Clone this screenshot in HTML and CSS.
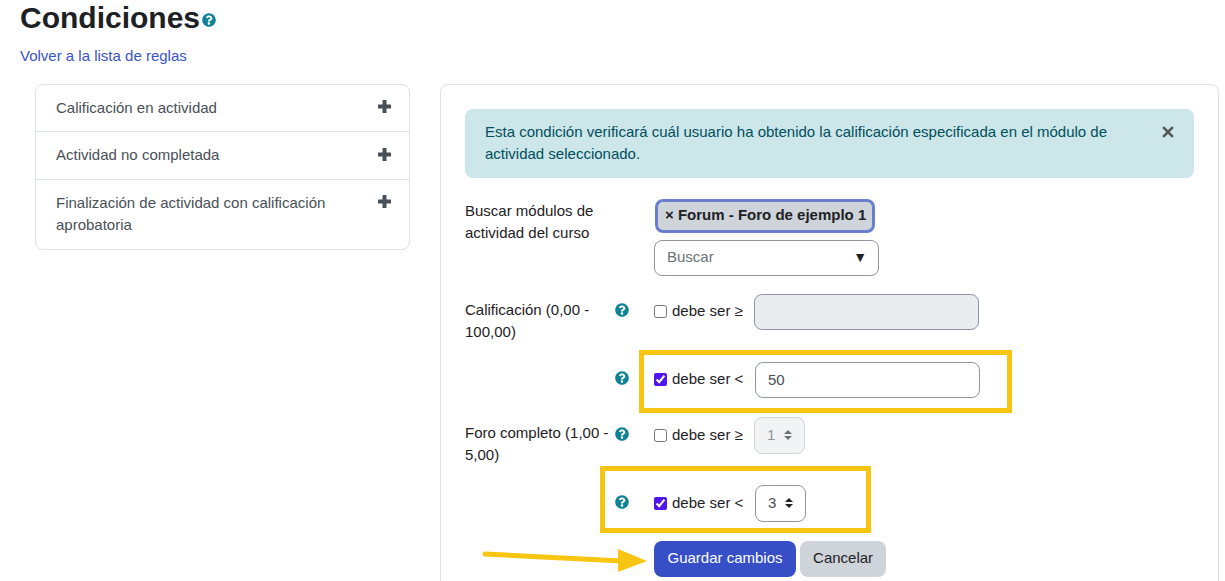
FILE: index.html
```html
<!DOCTYPE html>
<html lang="es">
<head>
	<meta charset="UTF-8">
	<title>Condiciones</title>
	<link rel="stylesheet" href="styles.css">
</head>
<body>
	<svg class="icon-defs" width="0" height="0">
		<symbol id="icon-help" viewBox="0 0 512 512">
			<path d="M504 256c0 136.997-111.043 248-248 248S8 392.997 8 256C8 119.083 119.043 8 256 8s248 111.083 248 248zM262.655 90c-54.497 0-89.255 22.957-116.549 63.758-3.536 5.286-2.353 12.415 2.715 16.258l34.699 26.31c5.205 3.947 12.621 3.008 16.665-2.122 17.864-22.658 30.113-35.797 57.303-35.797 20.429 0 45.698 13.148 45.698 32.958 0 14.976-12.363 22.667-32.534 33.976C247.128 238.528 216 254.941 216 296v4c0 6.627 5.373 12 12 12h56c6.627 0 12-5.373 12-12v-1.333c0-28.462 83.186-29.647 83.186-106.667 0-58.002-60.165-102-116.531-102zM256 338c-25.365 0-46 20.635-46 46 0 25.364 20.635 46 46 46s46-20.636 46-46c0-25.365-20.635-46-46-46z"/>
		</symbol>
		<symbol id="icon-plus" viewBox="0 0 13 13">
			<path d="M5 0H8Q8.5 0 8.5 .5V4.5H12.5Q13 4.5 13 5V8Q13 8.5 12.5 8.5H8.5V12.5Q8.5 13 8 13H5Q4.5 13 4.5 12.5V8.5H.5Q0 8.5 0 8V5Q0 4.5 .5 4.5H4.5V.5Q4.5 0 5 0z"/>
		</symbol>
		<symbol id="icon-updown" viewBox="0 0 8 10">
			<path d="M4 0 8 4H0zM4 10 0 6H8z"/>
		</symbol>
	</svg>

	<header class="page-head">
		<h1 class="page-title">Condiciones<svg class="help help-title"><use href="#icon-help"/></svg></h1>
		<a class="back-link" href="#">Volver a la lista de reglas</a>
	</header>

	<div class="columns">
		<ul class="rule-list">
			<li class="rule-item"><span>Calificación en actividad</span><svg class="plus"><use href="#icon-plus"/></svg></li>
			<li class="rule-item"><span>Actividad no completada</span><svg class="plus"><use href="#icon-plus"/></svg></li>
			<li class="rule-item"><span>Finalización de actividad con calificación aprobatoria</span><svg class="plus"><use href="#icon-plus"/></svg></li>
		</ul>

		<section class="card">
			<div class="alert">
				<p>Esta condición verificará cuál usuario ha obtenido la calificación especificada en el módulo de actividad seleccionado.</p>
				<svg class="alert-close" viewBox="0 0 12 12"><path d="M1.2 1.2 10.8 10.8M10.8 1.2 1.2 10.8"/></svg>
			</div>

			<form class="rule-form">
				<div class="row row-search">
					<div class="row-label"><span class="label-text">Buscar módulos de actividad del curso</span></div>
					<div class="search-field">
						<span class="chip">× Forum - Foro de ejemplo 1</span>
						<div class="search-box"><span>Buscar</span><span class="search-caret">▼</span></div>
					</div>
				</div>

				<div class="row">
					<div class="row-label"><span class="label-text">Calificación (0,00 - 100,00)</span><svg class="help"><use href="#icon-help"/></svg></div>
					<div class="check-field">
						<label class="check"><input type="checkbox">debe ser ≥</label>
						<input class="text-input" type="text" disabled>
					</div>
				</div>

				<div class="row row-grade-max">
					<div class="row-label row-label-empty"><span class="label-text"></span><svg class="help"><use href="#icon-help"/></svg></div>
					<div class="check-field">
						<label class="check"><input type="checkbox" checked>debe ser &lt;</label>
						<input class="text-input shifted" type="text" value="50">
					</div>
				</div>

				<div class="row num-row">
					<div class="row-label"><span class="label-text">Foro completo (1,00 - 5,00)</span><svg class="help"><use href="#icon-help"/></svg></div>
					<div class="check-field">
						<label class="check"><input type="checkbox">debe ser ≥</label>
						<div class="num-select disabled"><span>1</span><svg class="updown"><use href="#icon-updown"/></svg></div>
					</div>
				</div>

				<div class="row num-row row-forum-max">
					<div class="row-label row-label-empty"><span class="label-text"></span><svg class="help"><use href="#icon-help"/></svg></div>
					<div class="check-field">
						<label class="check"><input type="checkbox" checked>debe ser &lt;</label>
						<div class="num-select shifted"><span>3</span><svg class="updown"><use href="#icon-updown"/></svg></div>
					</div>
				</div>

				<div class="row">
					<div></div>
					<div class="actions">
						<button class="btn btn-primary" type="button">Guardar cambios</button>
						<button class="btn btn-secondary" type="button">Cancelar</button>
					</div>
				</div>
			</form>
		</section>
	</div>

	<!-- yellow marks drawn over the screenshot -->
	<div class="mark mark-grade"></div>
	<div class="mark mark-forum"></div>
	<svg class="mark-arrow" viewBox="0 0 170 30"><path class="arrow-line" d="M3 6 140 13"/><path class="arrow-head" d="M136 1 165 13 136 24z"/></svg>
</body>
</html>
```

FILE: styles.css
```css
html, body {
	height: 581px;
	overflow: hidden;
}

body {
	position: relative;
	margin: 0;
	background-color: #fff;
	color: #1d2125;
	font-family: "Liberation Sans", Arial, sans-serif;
	font-size: 15px;
	line-height: 22.5px;
}

.icon-defs {
	display: block;
	height: 0;
}

.page-head {
	padding: 0 20px;
}

.page-title {
	margin: 0 0 9px;
	font-size: 30px;
	line-height: 36px;
	font-weight: bold;
}

.help {
	flex: none;
	width: 14px;
	height: 14px;
	fill: #0f8298;
}

.help-title {
	margin-left: 2px;
	vertical-align: 1px;
}

.back-link {
	display: block;
	color: #3a53c7;
	text-decoration: none;
}

.columns {
	display: grid;
	grid-template-columns: 375px 779px;
	column-gap: 30px;
	height: 497px;
	margin: 16px 0 0 35px;
	overflow: hidden;
}

.rule-list {
	align-self: start;
	margin: 0;
	padding: 0;
	list-style: none;
	border: 1px solid #dee2e6;
	border-radius: 8px;
	color: #495057;
}

.rule-item {
	display: flex;
	justify-content: space-between;
	padding: 12px 18px 12px 20px;
	border-bottom: 1px solid #dee2e6;
}

.rule-item:last-child {
	border-bottom: none;
}

.rule-item span {
	max-width: 290px;
}

.plus {
	flex: none;
	width: 13px;
	height: 13px;
	margin-top: 3.5px;
	fill: #495057;
}

.card {
	height: 600px;
	padding: 24px;
	border: 1px solid #dee2e6;
	border-radius: 8px;
}

.alert {
	display: flex;
	justify-content: space-between;
	padding: 12px 20px;
	border-radius: 8px;
	background-color: #cce6ea;
	color: #004f5c;
}

.alert p {
	margin: 0;
	max-width: 640px;
}

.alert-close {
	flex: none;
	width: 12px;
	height: 12px;
	margin: 5px 0 0;
	fill: none;
	stroke: #555;
	stroke-width: 2.6;
}

.rule-form {
	margin-top: 21px;
}

.row {
	display: grid;
	grid-template-columns: 189px 1fr;
	margin-bottom: 18px;
}

.row-grade-max,
.row-forum-max {
	margin-bottom: 19px;
}

.row-label {
	display: flex;
	justify-content: space-between;
	align-items: flex-start;
	padding: 5px 25px 0 0;
}

.row-search .row-label {
	padding-top: 1px;
}

.row-label-empty {
	padding-top: 0;
}

.label-text {
	width: 146px;
}

.row-label .help {
	margin-top: 4px;
}

.num-row .row-label .help {
	margin-top: 5px;
}

.row-label-empty .help {
	margin-top: 9px;
}

.num-row .row-label-empty .help {
	margin-top: 10px;
}

.search-field {
	display: flex;
	flex-direction: column;
	align-items: flex-start;
	gap: 7px;
}

.chip {
	margin-left: 1px;
	padding: 2px 6px 4px 7px;
	border: 3px solid #6a7ed0;
	border-radius: 8px;
	background-color: #ced4da;
	font-weight: bold;
	line-height: 22px;
}

.search-box {
	display: flex;
	justify-content: space-between;
	align-items: center;
	box-sizing: border-box;
	width: 225px;
	height: 36px;
	padding: 0 11px 0 12px;
	border: 1px solid #8f959e;
	border-radius: 8px;
	color: #6a737b;
}

.search-caret {
	color: #1d2125;
	font-size: 14px;
}

.check-field {
	display: flex;
	align-items: flex-start;
}

.check {
	display: flex;
	align-items: center;
	width: 100px;
	height: 36px;
}

.num-row .check {
	height: 37px;
}

.check input {
	width: 13px;
	height: 13px;
	margin: 0 5px 0 0;
	accent-color: #4f14f0;
}

.text-input {
	box-sizing: border-box;
	width: 225px;
	height: 36px;
	padding: 0 12px;
	border: 1px solid #8f959e;
	border-radius: 8px;
	background-color: #fff;
	color: #495057;
	font: inherit;
}

.text-input:disabled {
	background-color: #e9ecef;
}

.shifted {
	margin-left: 1px;
}

.num-select {
	display: flex;
	justify-content: space-between;
	align-items: center;
	box-sizing: border-box;
	width: 51px;
	height: 37px;
	padding: 0 12px;
	border: 1px solid #8f959e;
	border-radius: 8px;
	color: #495057;
}

.num-select.disabled {
	border-color: #ced4da;
	background-color: #f1f3f5;
	color: #8f959e;
}

.updown {
	width: 8px;
	height: 10px;
	fill: #1d2125;
}

.disabled .updown {
	fill: #6a737b;
}

.actions {
	display: flex;
	gap: 4px;
}

.btn {
	height: 36px;
	padding: 0 13.5px;
	border: none;
	border-radius: 8px;
	font: inherit;
}

.btn-primary {
	background-color: #364fc7;
	color: #fff;
}

.btn-secondary {
	padding: 0 13px;
	background-color: #ced4da;
	color: #1d2125;
}

.mark {
	position: absolute;
	box-sizing: border-box;
	border: 5px solid #f8c513;
}

.mark-grade {
	left: 639px;
	top: 350px;
	width: 373px;
	height: 63px;
}

.mark-forum {
	left: 600px;
	top: 466px;
	width: 271px;
	height: 67px;
}

.mark-arrow {
	position: absolute;
	left: 482px;
	top: 548px;
	width: 170px;
	height: 30px;
}

.arrow-line {
	fill: none;
	stroke: #f8c513;
	stroke-width: 5;
	stroke-linecap: round;
}

.arrow-head {
	fill: #f8c513;
}
```
